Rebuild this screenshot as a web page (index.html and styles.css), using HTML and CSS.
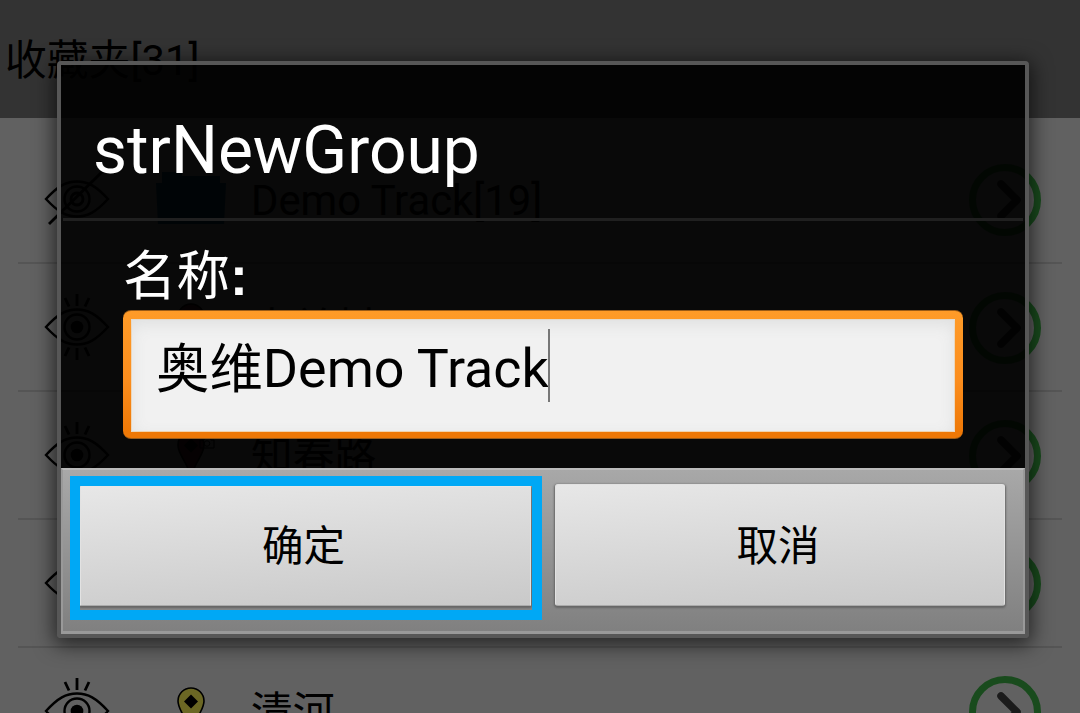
FILE: index.html
```html
<!DOCTYPE html>
<html lang="zh-CN">
<head>
<meta charset="utf-8">
<title>收藏夹</title>
<link rel="stylesheet" href="styles.css">
</head>
<body>
<svg class="defs" width="0" height="0">
  <defs>
    <g id="eye-shape" fill="none" stroke="#000" stroke-width="2.4">
      <path d="M2 34C14 21 22 16.500 33 16.500S52 21 64 34C52 47 44 51.500 33 51.500S14 47 2 34Z"/>
      <circle cx="33" cy="34" r="12.5"/>
    </g>
    <symbol id="eye" viewBox="0 0 66 68">
      <use href="#eye-shape"/>
      <circle cx="33" cy="34" r="6.3"/>
      <path d="M21 5l4 8.500M33 1v12M45 5l-4 8.500M21 63l4-8.500M33 67V55M45 63l-4-8.500" fill="none" stroke="#000" stroke-width="2.8"/>
    </symbol>
    <symbol id="eye-off" viewBox="0 0 66 68">
      <use href="#eye-shape"/>
      <circle cx="33" cy="34" r="6" fill="none" stroke="#000" stroke-width="2.8"/>
      <path d="M5 59L59 6" stroke="#000" stroke-width="2.8"/>
    </symbol>
    <symbol id="go" viewBox="0 0 72 72">
      <circle cx="36" cy="36" r="32.5" fill="none" stroke="#194b1d" stroke-width="7"/>
      <path d="M32 20l16 16-16 16" fill="none" stroke="#1b1b1b" stroke-width="7.5" stroke-linecap="round" stroke-linejoin="round"/>
    </symbol>
    <symbol id="pin" viewBox="0 0 28 48">
      <path d="M14 1A13 13 0 0 0 1 14c0 10 9 16 13 32 4-16 13-22 13-32A13 13 0 0 0 14 1Z" fill="currentColor" stroke="#000" stroke-width="1.6"/>
      <path d="M14 7.500l7 7L14 21.500l-7-7Z" fill="#000"/>
    </symbol>
  </defs>
</svg>
<div class="screen">
  <header class="topbar">收藏夹[31]</header>
  <main class="list">
    <div class="row">
      <svg class="eye"><use href="#eye-off"/></svg>
      <svg class="folder" viewBox="0 0 70 54"><path d="M6 0h20v4h38v7h6l-2 41H2L0 11h6Z" fill="#003049"/></svg>
      <span class="name">Demo Track[19]</span>
      <svg class="go"><use href="#go"/></svg>
    </div>
    <div class="row">
      <svg class="eye"><use href="#eye"/></svg>
      <svg class="pin red"><use href="#pin"/></svg>
      <span class="name">中关村</span>
      <svg class="go"><use href="#go"/></svg>
    </div>
    <div class="row">
      <svg class="eye"><use href="#eye"/></svg>
      <svg class="pin red"><use href="#pin"/></svg>
      <svg class="camera" viewBox="0 0 16 12"><path d="M1 3h4l1-2h5l1 2h3v8H1Z" fill="none" stroke="#000"/><circle cx="8" cy="6.5" r="2.8" fill="none" stroke="#000"/></svg>
      <span class="name">知春路</span>
      <svg class="go"><use href="#go"/></svg>
    </div>
    <div class="row">
      <svg class="eye"><use href="#eye"/></svg>
      <span class="name"></span>
      <svg class="go"><use href="#go"/></svg>
    </div>
    <div class="row">
      <svg class="eye"><use href="#eye"/></svg>
      <svg class="pin yellow"><use href="#pin"/></svg>
      <span class="name">清河</span>
      <svg class="go"><use href="#go"/></svg>
    </div>
  </main>
  <div class="dialog">
    <div class="content">
      <h1 class="title">strNewGroup</h1>
      <div class="form">
        <div class="label">名称<span class="colon">:</span></div>
        <div class="field"><div class="input"><span class="cjk">奥维</span><span class="latin">Demo Track</span><i class="caret"></i></div></div>
      </div>
    </div>
    <div class="actions">
      <div class="slot selected"><div class="button">确定</div></div>
      <div class="slot"><div class="button">取消</div></div>
    </div>
  </div>
</div>
</body>
</html>
```
FILE: styles.css
```css
* { box-sizing: border-box; }
body { margin: 0; font-family: Roboto, "Noto Sans CJK SC", sans-serif; color: #000; }
.defs { position: absolute; }
.screen { position: relative; width: 1080px; height: 713px; overflow: hidden; background: #616161; }
.topbar { height: 118px; padding: 2px 0 0 5px; background: #333; font-size: 41.8px; line-height: 118px; white-space: nowrap; }
.list { padding: 18px 18px 0; }
.row { position: relative; display: grid; grid-template-columns: 121px 113px 1fr 72px; align-items: center; height: 128px; padding-right: 21px; border-bottom: 2px solid #555; }
.row svg { display: block; }
.eye { width: 66px; height: 68px; margin-left: 26px; }
.folder { width: 70px; height: 54px; margin-left: 17px; }
.pin { width: 28px; height: 48px; margin-left: 38px; }
.red { color: #3c1218; }
.yellow { color: #6b6724; }
.camera { position: absolute; left: 181px; top: 45px; width: 16px; height: 12px; }
.name { grid-column: 3; padding-top: 4px; margin-left: -1px; font-size: 41.8px; line-height: 60px; white-space: nowrap; }
.go { grid-column: 4; width: 72px; height: 72px; margin-top: 1px; }

.dialog { position: absolute; left: 57px; top: 61px; width: 972px; height: 577px; display: flex; flex-direction: column; border: 4px solid #575757; border-radius: 4px; box-shadow: 0 4px 20px 3px rgba(0,0,0,.62); }
.content { flex: none; height: 403px; background: rgba(0,0,0,.91); }
.title { height: 156px; margin: 0 2px; padding: 44px 0 0 30px; border-bottom: 3px solid #202020; color: #fff; font-size: 65.9px; font-weight: 400; line-height: 84px; }
.form { padding: 22px 62px 0; }
.label { height: 67px; padding-top: 1px; color: #fff; font-size: 53.5px; line-height: 66px; }
.colon { margin-left: 0; font-family: "Liberation Sans", sans-serif; font-weight: 700; }
.field { height: 129px; padding: 8px; border-radius: 8px; background: linear-gradient(#ff9b28, #fb8d1d 55%, #ee7806 95%); border: 1px solid #9b5b16; border-width: 1px 0; }
.input { display: flex; height: 113px; padding: 9px 0 0 25px; background: #f1f1f1; box-shadow: inset 0 5px 16px #dedfdf, inset 0 0 0 1px #f7cf9b; font-size: 53.4px; line-height: 81px; white-space: nowrap; }
.cjk { padding-top: 1px; }
.latin { font-size: 53.8px; }
.caret { width: 2px; height: 73px; margin: 1px 0 0 -1px; background: #777; }
.actions { flex: 1; display: flex; gap: 3px; padding: 6px 0 0 7px; background: linear-gradient(#a8a8a8, #808080); border: 1px solid #999; border-width: 2px 2px 3px; border-top-color: #bbb; }
.slot { flex: none; width: 472px; height: 144px; padding: 8px 12px 0 10px; }
.slot.selected { padding: 0 1px 0 0; border: 10px solid #00a8f5; }
.button { height: 122px; padding: 2px 4px 0 0; border-radius: 3px; border: 1px solid #e2e2e2; border-bottom-color: #aaa; background: linear-gradient(176deg, #e7e7e7, #c9c9c9); box-shadow: 0 1px 2px 1px #666; font-size: 41.5px; line-height: 120px; text-align: center; }
.selected .button { height: 120px; padding-top: 0; border-top-color: #e7e7e7; clip-path: inset(0 -1px -3px 0); border-radius: 1px; }
```
